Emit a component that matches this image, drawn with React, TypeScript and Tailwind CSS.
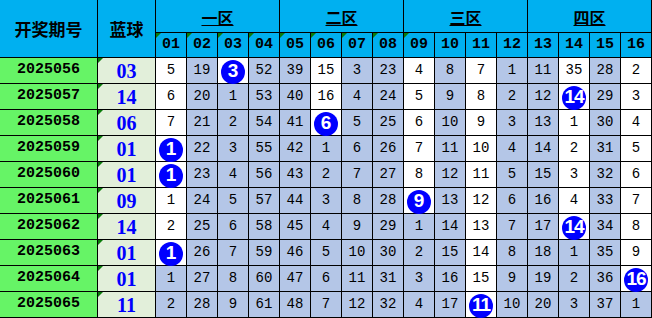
import React from "react";

type Row = { period: string; blue: number; hit: number; nums: number[] };

const rows: Row[] = [
  { period: "2025056", blue: 3, hit: 3, nums: [5, 19, 3, 52, 39, 15, 3, 23, 4, 8, 7, 1, 11, 35, 28, 2] },
  { period: "2025057", blue: 14, hit: 14, nums: [6, 20, 1, 53, 40, 16, 4, 24, 5, 9, 8, 2, 12, 14, 29, 3] },
  { period: "2025058", blue: 6, hit: 6, nums: [7, 21, 2, 54, 41, 6, 5, 25, 6, 10, 9, 3, 13, 1, 30, 4] },
  { period: "2025059", blue: 1, hit: 1, nums: [1, 22, 3, 55, 42, 1, 6, 26, 7, 11, 10, 4, 14, 2, 31, 5] },
  { period: "2025060", blue: 1, hit: 1, nums: [1, 23, 4, 56, 43, 2, 7, 27, 8, 12, 11, 5, 15, 3, 32, 6] },
  { period: "2025061", blue: 9, hit: 9, nums: [1, 24, 5, 57, 44, 3, 8, 28, 9, 13, 12, 6, 16, 4, 33, 7] },
  { period: "2025062", blue: 14, hit: 14, nums: [2, 25, 6, 58, 45, 4, 9, 29, 1, 14, 13, 7, 17, 14, 34, 8] },
  { period: "2025063", blue: 1, hit: 1, nums: [1, 26, 7, 59, 46, 5, 10, 30, 2, 15, 14, 8, 18, 1, 35, 9] },
  { period: "2025064", blue: 1, hit: 16, nums: [1, 27, 8, 60, 47, 6, 11, 31, 3, 16, 15, 9, 19, 2, 36, 16] },
  { period: "2025065", blue: 11, hit: 11, nums: [2, 28, 9, 61, 48, 7, 12, 32, 4, 17, 11, 10, 20, 3, 37, 1] },
];

// last row index each column was hit
const lastHit: number[] = Array.from({ length: 16 }, (_, c) => {
  let l = -1;
  rows.forEach((r, i) => {
    if (r.hit === c + 1) l = i;
  });
  return l;
});

const pad = (n: number) => (n < 10 ? "0" + n : "" + n);

const Tri = () => (
  <span className="absolute left-0 top-0 w-0 h-0 border-t-[5px] border-r-[5px] border-t-[#0a7d0a] border-r-transparent" />
);

const cellBase = "border-r border-b border-black relative flex items-center justify-center";

export default function App() {
  return (
    <div className="w-[652px] h-[318px] bg-white overflow-hidden">
      <div className="grid grid-cols-[98px_58px_repeat(16,31px)] grid-rows-[33px_25px_repeat(10,26px)] w-[652px]">
        {/* header */}
        <div className={`${cellBase} row-span-2 bg-[#00b0f0] text-[17px] font-bold text-black font-['Noto_Sans_CJK_SC',sans-serif]`}>
          开奖期号
        </div>
        <div className={`${cellBase} row-span-2 bg-[#00b0f0] text-[17px] font-bold text-black font-['Noto_Sans_CJK_SC',sans-serif]`}>
          蓝球
        </div>
        {["一区", "二区", "三区", "四区"].map((z) => (
          <div
            key={z}
            className={`${cellBase} col-span-4 bg-[#00b0f0] pt-[2px] text-[16px] font-bold text-black font-['Noto_Sans_CJK_SC',sans-serif]`}
          >
            <span className="underline underline-offset-[1px] decoration-[1px]">{z}</span>
          </div>
        ))}
        {Array.from({ length: 16 }, (_, i) => (
          <div
            key={i}
            className={`${cellBase} bg-[#00b0f0] text-[15px] font-bold text-black font-['Liberation_Mono',monospace]`}
          >
            {i < 9 && <Tri />}
            {pad(i + 1)}
          </div>
        ))}
        {/* data rows */}
        {rows.map((r, ri) => (
          <React.Fragment key={r.period}>
            <div className={`${cellBase} bg-[#66f466] text-[15px] font-bold text-black font-['Liberation_Mono',monospace]`}>
              {r.period}
            </div>
            <div className={`${cellBase} bg-[#e2efda] text-[20px] font-bold text-[#0000ff] font-['Liberation_Serif',serif]`}>
              <Tri />
              {pad(r.blue)}
            </div>
            {r.nums.map((n, ci) => {
              const hit = r.hit === ci + 1;
              const white = ri <= lastHit[ci];
              return (
                <div
                  key={ci}
                  className={`${cellBase} ${white ? "bg-white" : "bg-[#b4c6e7]"} text-[14px] text-black font-['Liberation_Mono',monospace]`}
                >
                  {hit ? (
                    <span
                      className={`mt-[2px] w-[24px] h-[24px] rounded-full bg-[#0000ff] text-white font-bold text-[19px] flex items-center justify-center font-['Liberation_Sans',Arial,sans-serif] ${
                        n >= 10 ? "tracking-[-1px]" : ""
                      }`}
                    >
                      {n}
                    </span>
                  ) : (
                    n
                  )}
                </div>
              );
            })}
          </React.Fragment>
        ))}
      </div>
    </div>
  );
}
